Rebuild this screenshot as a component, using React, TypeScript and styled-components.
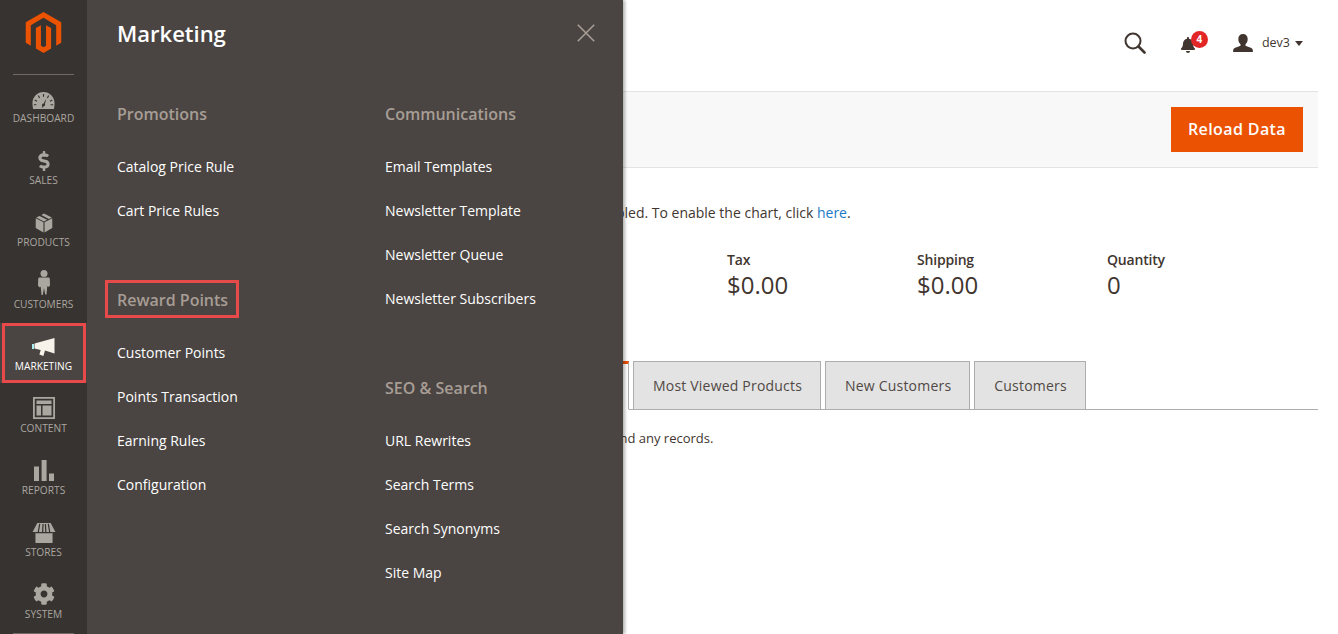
import { FC, ReactNode } from 'react'
import { SiMagento } from 'react-icons/si'
import { FaBell, FaCog, FaDollarSign } from 'react-icons/fa'
import styled, { createGlobalStyle } from 'styled-components'

const GlobalStyle = createGlobalStyle`
  html, body {
    margin: 0;
    padding: 0;
    height: 100%;
    background: #fff;
    overflow: hidden;
  }
  body {
    font-family: 'Open Sans', 'Liberation Sans', sans-serif;
    color: #41362f;
  }
`

const GaugeIcon = () => (
  <svg width="23" height="17" viewBox="0 0 24 18">
    <path
      fill="currentColor"
      fillRule="evenodd"
      d="M12 0C5.4 0 0.3 5.2 0.3 12c0 2 .2 4 .7 6h22c.5-2 .7-4 .7-6C23.700 5.200 18.600 0 12 0zM12.600 12.200c-.9-.4-1.900.2-2.200 1-.2.7 0 1.300.5 1.700l-.9 1.400h1.500l.6-1.300c.7 0 1.300-.4 1.500-1 .2-.5.1-1-.1-1.400l1.500-5.500-2.400 4.100z"
    />
    <path stroke="#373330" strokeWidth="1.200" d="M12 2v3M6.500 3.800l1.400 2.500M2.700 8.500l2.500 1.400M1.800 13.500h2.700M17.500 3.800l-1.400 2.500M21.300 8.500l-2.500 1.400M22.200 13.500h-2.700" />
  </svg>
)

const BoxIcon = () => (
  <svg width="18" height="20" viewBox="0 0 20 22">
    <path fill="currentColor" d="M9.400 10.200 0.800 5.700 V16.600 L9.400 21.600z" />
    <path fill="currentColor" d="M10.600 10.200 19.200 5.700 V16.600 L10.600 21.600z" />
    <path fill="currentColor" d="M5 3.100 1.300 4.800 9.900 9.300 13.500 7.500z" />
    <path fill="currentColor" d="M7 2.100 10 .5 18.700 4.800 15.500 6.500z" />
  </svg>
)

const PersonIcon = () => (
  <svg width="12" height="25" viewBox="0 0 12 25">
    <circle cx="6" cy="3.500" r="3.500" fill="currentColor" />
    <path fill="currentColor" d="M1.500 7.500h9c.8 0 1.200.6 1.300 1.300l.2 6.900-1.800 1.300-.9-1-.8 8.500H7.200L6 18l-1.200 7H3.500l-.8-8.500-.9 1L0 15.700l.2-6.900c.1-.7.500-1.300 1.300-1.300z" />
  </svg>
)

const MegaphoneIcon = () => (
  <svg width="23" height="19" viewBox="0 0 23 19">
    <path fill="#a8f0f0" d="M0 6h2v5H0z" />
    <path fill="#f7f3ea" d="M2.500 5.500 22.500 0v15.500L13 12.500l-1.600 5.500-4-1.500 1.300-4.500-6.200-1.500z" />
  </svg>
)

const ContentIcon = () => (
  <svg width="22" height="22" viewBox="0 0 22 22">
    <path fill="currentColor" fillRule="evenodd" d="M0 0h22v22H0zM1.800 1.800v18.400h18.400V1.800z" />
    <path fill="currentColor" d="M3.500 3.500h15v3.500h-15zM3.500 8.500h4.500v10H3.500zM9.500 8.500h9v10h-9z" />
  </svg>
)

const ReportsIcon = () => (
  <svg width="20" height="21" viewBox="0 0 20 21">
    <path fill="currentColor" d="M0 6.500h5V21H0zM7.600 0h5v21h-5zM15 13.500h5V21h-5z" />
  </svg>
)

const StoreIcon = () => (
  <svg width="24" height="20" viewBox="0 0 24 21">
    <path fill="currentColor" d="M3 10h18v11H3z" />
    <path fill="currentColor" d="M5 0h14l5 9.500H0z" />
    <path stroke="#373330" strokeWidth="1.300" d="M7.500 1 6 9.500M11 1l-.4 8.500M13.500 1l.4 8.500M16.500 1 18 9.500M3 10h18" />
  </svg>
)

const SearchIcon = () => (
  <svg width="22" height="22" viewBox="0 0 22 22">
    <circle cx="9" cy="9" r="7.500" fill="none" stroke="#41362f" strokeWidth="2" />
    <path stroke="#41362f" strokeWidth="2.600" strokeLinecap="round" d="M14.500 14.500l6 6" />
  </svg>
)

const UserIcon = () => (
  <svg width="20" height="18" viewBox="0 0 20 18">
    <path fill="#41362f" d="M10 0c3 0 4.700 2 4.700 5 0 2.300-1 4.300-2.200 5.300v1.500c2.200 1 6 1.800 7 3.200.3.800.4 1.800.4 3H.1c0-1.200.1-2.200.4-3 1-1.400 4.800-2.200 7-3.200v-1.500C6.300 9.300 5.300 7.300 5.300 5 5.300 2 7 0 10 0z" />
  </svg>
)

const CloseIcon = () => (
  <svg width="18" height="18" viewBox="0 0 18 18">
    <path stroke="#a79d95" strokeWidth="1.600" d="M.8.800l16.400 16.400M17.200.800.800 17.200" />
  </svg>
)

type NavEntry = { label: string; icon: ReactNode; active?: boolean }

const navEntries: NavEntry[] = [
  { label: 'DASHBOARD', icon: <GaugeIcon /> },
  { label: 'SALES', icon: <FaDollarSign size={20} /> },
  { label: 'PRODUCTS', icon: <BoxIcon /> },
  { label: 'CUSTOMERS', icon: <PersonIcon /> },
  { label: 'MARKETING', icon: <MegaphoneIcon />, active: true },
  { label: 'CONTENT', icon: <ContentIcon /> },
  { label: 'REPORTS', icon: <ReportsIcon /> },
  { label: 'STORES', icon: <StoreIcon /> },
  { label: 'SYSTEM', icon: <FaCog size={22} /> }
]

type MenuGroup = { title: string; links: string[]; boxed?: boolean }

const leftColumn: MenuGroup[] = [
  { title: 'Promotions', links: ['Catalog Price Rule', 'Cart Price Rules'] },
  {
    title: 'Reward Points',
    links: ['Customer Points', 'Points Transaction', 'Earning Rules', 'Configuration'],
    boxed: true
  }
]

const rightColumn: MenuGroup[] = [
  {
    title: 'Communications',
    links: ['Email Templates', 'Newsletter Template', 'Newsletter Queue', 'Newsletter Subscribers']
  },
  { title: 'SEO & Search', links: ['URL Rewrites', 'Search Terms', 'Search Synonyms', 'Site Map'] }
]

const stats = [
  { label: 'Revenue', value: '$0.00' },
  { label: 'Tax', value: '$0.00' },
  { label: 'Shipping', value: '$0.00' },
  { label: 'Quantity', value: '0' }
]

const tabs = ['Most Viewed Products', 'New Customers', 'Customers']

const renderColumn = (groups: MenuGroup[]) => (
  <MenuColumn>
    {groups.map((group) => (
      <MenuSection key={group.title}>
        <SectionTitle $boxed={group.boxed}>{group.title}</SectionTitle>
        {group.links.map((link) => (
          <MenuLink key={link}>{link}</MenuLink>
        ))}
      </MenuSection>
    ))}
  </MenuColumn>
)

const App: FC = () => {
  return (
    <Page>
      <GlobalStyle />
      <Sidebar>
        <LogoBox>
          <SiMagento size={41} color="#eb5202" />
        </LogoBox>
        <Nav>
          {navEntries.map((entry) => (
            <NavItem key={entry.label} $active={entry.active}>
              <NavIcon>{entry.icon}</NavIcon>
              <NavLabel>{entry.label}</NavLabel>
            </NavItem>
          ))}
        </Nav>
      </Sidebar>

      <Main>
        <Header>
          <SearchButton>
            <SearchIcon />
          </SearchButton>
          <Bell>
            <FaBell size={16} color="#41362f" />
            <Badge>4</Badge>
          </Bell>
          <UserMenu>
            <UserIcon />
            <UserName>dev3</UserName>
            <Caret />
          </UserMenu>
        </Header>
        <ActionBar>
          <ReloadButton>Reload Data</ReloadButton>
        </ActionBar>
        <ChartNotice>
          Chart is disabled. To enable the chart, click <NoticeLink>here</NoticeLink>.
        </ChartNotice>
        <Stats>
          {stats.map((stat) => (
            <Stat key={stat.label}>
              <StatLabel>{stat.label}</StatLabel>
              <StatValue>{stat.value}</StatValue>
            </Stat>
          ))}
        </Stats>
        <TabBar>
          <ActiveTab>Bestsellers</ActiveTab>
          {tabs.map((tab) => (
            <Tab key={tab}>{tab}</Tab>
          ))}
        </TabBar>
        <EmptyText>We couldn't find any records.</EmptyText>
      </Main>

      <Panel>
        <PanelHead>
          <PanelTitle>Marketing</PanelTitle>
          <CloseButton>
            <CloseIcon />
          </CloseButton>
        </PanelHead>
        <MenuColumns>
          {renderColumn(leftColumn)}
          {renderColumn(rightColumn)}
        </MenuColumns>
      </Panel>
    </Page>
  )
}

const Page = styled.div`
  position: relative;
  display: flex;
  width: 1338px;
  height: 634px;
  overflow: hidden;
`

const Sidebar = styled.aside`
  display: flex;
  flex-direction: column;
  flex: 0 0 87px;
  background-color: #373330;
`

const LogoBox = styled.div`
  display: flex;
  justify-content: center;
  align-items: flex-start;
  height: 75px;
  padding-top: 12px;
  box-sizing: border-box;
  color: #eb5202;
`

const Nav = styled.nav`
  display: flex;
  flex-direction: column;
  margin: 0;
  position: relative;
  flex: 1;
  &::before,
  &::after {
    content: '';
    display: block;
    flex: none;
    height: 1px;
    margin: 0 13px;
    background-color: #736963;
  }
`

const NavItem = styled.div<{ $active?: boolean }>`
  position: relative;
  display: flex;
  flex-direction: column;
  align-items: center;
  justify-content: flex-end;
  height: ${(p) => (p.$active ? '60px' : '62px')};
  margin-bottom: ${(p) => (p.$active ? '2px' : '0')};
  padding-bottom: ${(p) => (p.$active ? '10px' : '12px')};
  box-sizing: border-box;
  color: ${(p) => (p.$active ? '#fff' : '#aaa6a0')};
  background-color: ${(p) => (p.$active ? '#4a4542' : 'transparent')};
  ${(p) =>
    p.$active &&
    `&::after {
      content: '';
      position: absolute;
      top: 0;
      left: 2px;
      right: 1px;
      bottom: 0;
      border: 3px solid #e84a4a;
    }`}
`

const NavIcon = styled.div`
  display: flex;
  align-items: flex-end;
  justify-content: center;
  height: 26px;
  margin-bottom: 2px;
`

const NavLabel = styled.span`
  font-size: 10.2px;
  line-height: 14px;
  white-space: nowrap;
`

const Main = styled.main`
  display: flex;
  flex-direction: column;
  flex: 0 0 1231px;
  background-color: #fff;
`

const Header = styled.header`
  display: flex;
  align-items: center;
  justify-content: flex-end;
  height: 85px;
  padding-right: 15px;
  flex: 0 0 85px;
`

const SearchButton = styled.div`
  display: flex;
  margin-right: 34px;
`

const Bell = styled.div`
  position: relative;
  display: flex;
  margin-right: 37px;
  margin-top: 5px;
`

const Badge = styled.span`
  position: absolute;
  top: -6px;
  left: 11px;
  width: 17px;
  height: 17px;
  border-radius: 50%;
  background-color: #e22626;
  color: #fff;
  font-size: 10px;
  font-weight: 700;
  line-height: 17px;
  text-align: center;
`

const UserMenu = styled.div`
  display: flex;
  align-items: center;
`

const UserName = styled.span`
  margin-left: 9px;
  margin-bottom: 1px;
  font-size: 12.5px;
  color: #41362f;
`

const Caret = styled.span`
  width: 0;
  height: 0;
  margin-left: 5px;
  margin-top: 2px;
  border-left: 4px solid transparent;
  border-right: 4px solid transparent;
  border-top: 5px solid #41362f;
`

const ActionBar = styled.div`
  display: flex;
  align-items: center;
  justify-content: flex-end;
  height: 77px;
  padding-right: 15px;
  box-sizing: border-box;
  background-color: #f8f8f8;
  border-top: 1px solid #e3e3e3;
  border-bottom: 1px solid #e3e3e3;
  margin-top: 6px;
`

const ReloadButton = styled.button`
  width: 132px;
  height: 45px;
  padding: 0 0 2px;
  border: none;
  background-color: #eb5202;
  color: #fff;
  font-family: inherit;
  font-size: 16px;
  font-weight: 600;
  letter-spacing: 0.4px;
`

const ChartNotice = styled.p`
  margin: 35px 0 0;
  padding-left: 449px;
  font-size: 14px;
  line-height: 20px;
  white-space: nowrap;
`

const NoticeLink = styled.a`
  color: #1979c3;
`

const Stats = styled.div`
  display: grid;
  grid-template-columns: repeat(4, 190px);
  margin-top: 27px;
  padding-left: 450px;
`

const Stat = styled.div`
  display: flex;
  flex-direction: column;
`

const StatLabel = styled.span`
  font-size: 14px;
  font-weight: 600;
  line-height: 20px;
  letter-spacing: -0.2px;
`

const StatValue = styled.span`
  font-size: 24px;
  line-height: 30px;
`

const TabBar = styled.div`
  display: flex;
  align-items: flex-end;
  height: 49px;
  margin-top: 60px;
  padding-left: 422px;
  border-bottom: 1px solid #adadad;
  box-sizing: content-box;
`

const Tab = styled.div`
  display: flex;
  align-items: center;
  height: 49px;
  padding: 0 18px 0 19px;
  margin-left: 4px;
  margin-bottom: -1px;
  box-sizing: border-box;
  border: 1px solid #adadad;
  background-color: #e3e3e3;
  font-size: 14px;
  letter-spacing: 0.2px;
  color: #514943;
  white-space: nowrap;
`

const ActiveTab = styled(Tab)`
  width: 120px;
  margin-left: 0;
  border-top: 3px solid #eb5202;
  border-bottom-color: #fff;
  background-color: #fff;
`

const EmptyText = styled.p`
  margin: 19px 0 0;
  padding-left: 450px;
  font-size: 13px;
  line-height: 18px;
  white-space: nowrap;
`

const Panel = styled.section`
  position: absolute;
  top: 0;
  left: 87px;
  bottom: 0;
  width: 536px;
  padding: 0 28px 0 30px;
  box-sizing: border-box;
  background-color: #4a4542;
  box-shadow: 2px 0 3px rgba(0, 0, 0, 0.3);
  color: #fff;
`

const PanelHead = styled.div`
  display: flex;
  align-items: center;
  justify-content: space-between;
  height: 66px;
`

const PanelTitle = styled.h2`
  margin: 0;
  font-size: 22px;
  font-weight: 600;
  line-height: 32px;
`

const CloseButton = styled.div`
  display: flex;
`

const MenuColumns = styled.div`
  display: grid;
  grid-template-columns: 268px 1fr;
  margin-top: 35px;
`

const MenuColumn = styled.div`
  display: flex;
  flex-direction: column;
`

const MenuSection = styled.div`
  display: flex;
  flex-direction: column;
  margin-bottom: 41px;
`

const SectionTitle = styled.h3<{ $boxed?: boolean }>`
  position: relative;
  align-self: flex-start;
  margin: 0 0 31px;
  font-size: 16px;
  font-weight: 600;
  line-height: 26px;
  color: #a79d95;
  ${(p) =>
    p.$boxed &&
    `&::after {
      content: '';
      position: absolute;
      top: -7px;
      left: -12px;
      right: -11px;
      bottom: -5px;
      border: 3px solid #e84a4a;
    }`}
`

const MenuLink = styled.a`
  height: 44px;
  font-size: 14px;
  line-height: 18px;
  color: #fff;
  white-space: nowrap;
`

export default App
